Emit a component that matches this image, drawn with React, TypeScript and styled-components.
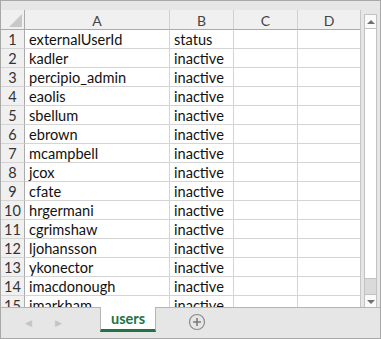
import React from 'react';
import styled, { createGlobalStyle } from 'styled-components';

const users = [
  'externalUserId',
  'kadler',
  'percipio_admin',
  'eaolis',
  'sbellum',
  'ebrown',
  'mcampbell',
  'jcox',
  'cfate',
  'hrgermani',
  'cgrimshaw',
  'ljohansson',
  'ykonector',
  'imacdonough',
  'imarkham',
];

const columns = ['A', 'B', 'C', 'D'];

export default function App(): JSX.Element {
  return (
    <>
      <Global />
      <Window>
        <TopBand />
        <Main>
          <Sheet>
            <Corner>
              <Triangle />
            </Corner>
            {columns.map((c) => (
              <ColHead key={c}>{c}</ColHead>
            ))}
            {users.map((u, i) => (
              <React.Fragment key={u}>
                <RowHead>{i + 1}</RowHead>
                <Cell>{u}</Cell>
                <Cell>{i === 0 ? 'status' : 'inactive'}</Cell>
                <Cell />
                <Cell $last />
              </React.Fragment>
            ))}
          </Sheet>
          <ScrollCol>
            <Scrollbar>
              <ScrollBtn>
                <Arrow $up />
              </ScrollBtn>
              <Thumb />
              <Track />
              <ScrollBtn $bottom>
                <Arrow />
              </ScrollBtn>
            </Scrollbar>
          </ScrollCol>
        </Main>
        <TabBar>
          <Nav>
            <NavArrow>&#9664;</NavArrow>
            <NavArrow>&#9654;</NavArrow>
          </Nav>
          <Tab>users</Tab>
          <AddSheet>
            <svg width="18" height="18" viewBox="0 0 18 18">
              <circle cx="9" cy="9" r="7.5" fill="none" stroke="#8a8a8a" strokeWidth="1.2" />
              <path d="M9 5v8M5 9h8" stroke="#7a7a7a" strokeWidth="1.6" />
            </svg>
          </AddSheet>
        </TabBar>
      </Window>
    </>
  );
}

const Global = createGlobalStyle`
  html, body {
    margin: 0;
    padding: 0;
    background: #fff;
  }
  * {
    box-sizing: border-box;
  }
`;

const Window = styled.div`
  width: 381px;
  height: 339px;
  border: 1px solid #a8a8a8;
  background: #e6e6e6;
  display: flex;
  flex-direction: column;
  font-family: Lato, 'Liberation Sans', sans-serif;
  overflow: hidden;
`;

const TopBand = styled.div`
  height: 9px;
  flex: none;
`;

const Main = styled.div`
  height: 298px;
  flex: none;
  display: flex;
`;

const Sheet = styled.div`
  width: 360px;
  height: 298px;
  overflow: hidden;
  background: #fff;
  display: grid;
  grid-template-columns: 24px 145px 64px 64px 63px;
  grid-template-rows: 20px;
  grid-auto-rows: 19px;
  border-right: 1px solid #c6c6c6;
`;

const Corner = styled.div`
  background: #f0f0f0;
  border-right: 1px solid #ababab;
  border-bottom: 1px solid #ababab;
  position: relative;
`;

const Triangle = styled.div`
  position: absolute;
  right: 2px;
  bottom: 2px;
  width: 0;
  height: 0;
  border-left: 13px solid transparent;
  border-bottom: 13px solid #c8c8c8;
`;

const ColHead = styled.div`
  background: #f0f0f0;
  border-right: 1px solid #d0d0d0;
  border-bottom: 1px solid #ababab;
  color: #444;
  font-size: 14px;
  display: flex;
  align-items: center;
  justify-content: center;
  padding-top: 1px;
`;

const RowHead = styled.div`
  background: #f0f0f0;
  border-right: 1px solid #ababab;
  border-bottom: 1px solid #d4d4d4;
  color: #333;
  font-size: 14.5px;
  display: flex;
  align-items: center;
  justify-content: center;
  padding-top: 1px;
`;

const Cell = styled.div<{ $last?: boolean }>`
  border-right: 1px solid ${(p) => (p.$last ? '#c6c6c6' : '#d4d4d4')};
  border-bottom: 1px solid #d4d4d4;
  color: #111;
  font-size: 14.6px;
  padding: 1px 0 0 4px;
  display: flex;
  align-items: center;
  white-space: nowrap;
  overflow: hidden;
`;

const ScrollCol = styled.div`
  flex: 1;
  padding: 4px 2px 0 3px;
  display: flex;
`;

const Scrollbar = styled.div`
  width: 13px;
  height: 294px;
  border: 1px solid #c2c2c2;
  border-bottom: none;
  display: flex;
  flex-direction: column;
  background: #dadada;
`;

const ScrollBtn = styled.div<{ $bottom?: boolean }>`
  height: 14px;
  flex: none;
  background: #fafafa;
  display: flex;
  align-items: center;
  justify-content: center;
  border-bottom: ${(p) => (p.$bottom ? 'none' : '1px solid #c2c2c2')};
  border-top: ${(p) => (p.$bottom ? '1px solid #c2c2c2' : 'none')};
`;

const Arrow = styled.div<{ $up?: boolean }>`
  width: 0;
  height: 0;
  border-left: 4px solid transparent;
  border-right: 4px solid transparent;
  ${(p) => (p.$up ? 'border-bottom: 4px solid #707070;' : 'border-top: 4px solid #707070;')}
`;

const Thumb = styled.div`
  height: 250px;
  flex: none;
  background: #fff;
  border-bottom: 1px solid #c2c2c2;
`;

const Track = styled.div`
  flex: 1;
`;

const TabBar = styled.div`
  height: 29px;
  flex: none;
  display: flex;
  align-items: stretch;
  border-top: 1px solid #b4b4b4;
  margin-top: -1px;
`;

const Nav = styled.div`
  width: 99px;
  display: flex;
  align-items: center;
  padding-left: 24px;
  gap: 21px;
`;

const NavArrow = styled.span`
  font-size: 9px;
  color: #c4c4c4;
  width: 9px;
`;

const Tab = styled.div`
  width: 56px;
  margin-top: -1px;
  height: 25px;
  background: #fff;
  border-left: 1px solid #b4b4b4;
  border-right: 1px solid #b4b4b4;
  border-bottom: 3px solid #217346;
  color: #217346;
  font-weight: bold;
  font-size: 14.5px;
  display: flex;
  align-items: center;
  justify-content: center;
  padding-top: 1px;
`;

const AddSheet = styled.div`
  display: flex;
  align-items: center;
  padding-left: 32px;
  padding-bottom: 1px;
`;
